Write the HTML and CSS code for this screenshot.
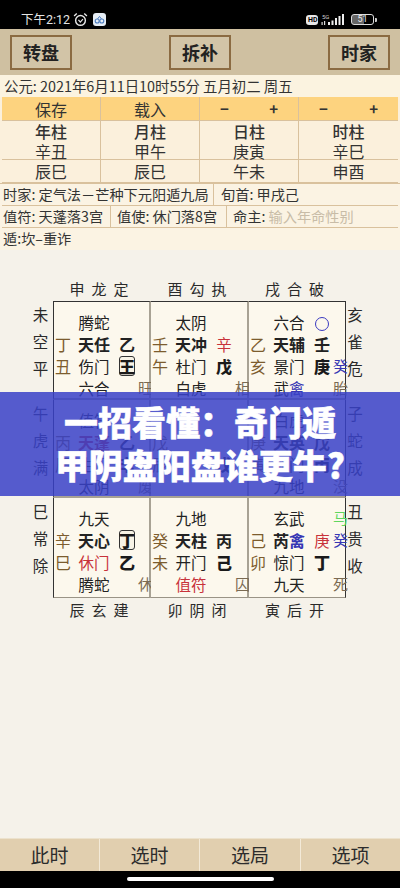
FILE: index.html
```html
<!DOCTYPE html>
<html lang="zh-CN">
<head>
<meta charset="utf-8">
<title>奇门遁甲</title>
<link rel="stylesheet" href="styles.css">
</head>
<body>
<div class="page">
  <header class="status">
    <div class="status-left">
      <span class="clock">下午2:12</span>
      <svg class="ic-alarm" viewBox="0 0 16 16" width="15" height="15"><circle cx="8" cy="9" r="5.2" fill="none" stroke="#e8e8e8" stroke-width="1.5"/><path d="M5.8 8.4 L7.8 10.8 L10.6 7.6" fill="none" stroke="#e8e8e8" stroke-width="1.3"/><path d="M1.2 4.2 L4 1.6 M14.8 4.2 L12 1.6" stroke="#e8e8e8" stroke-width="1.5" fill="none"/></svg>
      <svg class="ic-app" viewBox="0 0 13 13" width="13" height="13"><rect width="13" height="13" rx="3" fill="#e6edf5"/><circle cx="4.2" cy="8" r="2" fill="none" stroke="#4f7fc0" stroke-width="1.1"/><circle cx="8.8" cy="8" r="2" fill="none" stroke="#4f7fc0" stroke-width="1.1"/><path d="M4.5 6 L6.5 3.4 L8.5 6" fill="none" stroke="#4f7fc0" stroke-width="1"/></svg>
    </div>
    <div class="status-right">
      <span class="hd">HD</span>
      <svg viewBox="0 0 25 14" width="25" height="14"><text x="1" y="5.5" class="tiny">5G</text><rect x="0.5" y="9" width="1.2" height="3" fill="#ddd"/><rect x="3" y="8" width="1.2" height="4" fill="#ddd"/><rect x="7" y="9" width="2" height="3" fill="#eee"/><rect x="10.5" y="7.5" width="2" height="4.5" fill="#eee"/><rect x="14" y="5" width="2" height="7" fill="#eee"/><rect x="17.5" y="3" width="2" height="9" fill="#eee"/><rect x="21" y="1" width="2" height="11" fill="#eee"/></svg>
      <span class="battery"><span class="battery-num">51</span></span><span class="battery-tip"></span>
    </div>
  </header>

  <nav class="toolbar">
    <button class="tool">转盘</button>
    <button class="tool">拆补</button>
    <button class="tool">时家</button>
  </nav>

  <div class="date">公元: 2021年6月11日10时55分 五月初二 周五</div>

  <section class="pillars">
    <div class="p-row orange">
      <div class="p-cell">保存</div>
      <div class="p-cell">载入</div>
      <div class="p-cell pm"><span>−</span><span>+</span></div>
      <div class="p-cell pm"><span>−</span><span>+</span></div>
    </div>
    <div class="p-row">
      <div class="p-cell two"><b>年柱</b><span>辛丑</span></div>
      <div class="p-cell two"><b>月柱</b><span>甲午</span></div>
      <div class="p-cell two"><b>日柱</b><span>庚寅</span></div>
      <div class="p-cell two"><b>时柱</b><span>辛巳</span></div>
    </div>
    <div class="p-row">
      <div class="p-cell">辰巳</div>
      <div class="p-cell">辰巳</div>
      <div class="p-cell">午未</div>
      <div class="p-cell">申酉</div>
    </div>
  </section>

  <section class="info">
    <div class="i-row"><div class="i-cell">时家: 定气法－芒种下元阳遁九局</div><div class="i-cell">旬首: 甲戌己</div></div>
    <div class="i-row"><div class="i-cell">值符: 天蓬落3宫</div><div class="i-cell">值使: 休门落8宫</div><div class="i-cell">命主: <span class="hint">输入年命性别</span></div></div>
    <div class="i-row"><div class="i-cell">遁:坎–重诈</div></div>
  </section>

  <section class="board">
    <div class="corner"></div>
    <div class="edge"><span>申</span><span>龙</span><span>定</span></div>
    <div class="edge"><span>酉</span><span>勾</span><span>执</span></div>
    <div class="edge"><span>戌</span><span>合</span><span>破</span></div>
    <div class="corner"></div>

    <div class="side"><span>未</span><span>空</span><span>平</span></div>
    <div class="cell top first">
      <div class="line"><i></i><span class="star">腾蛇</span></div>
      <div class="line"><i>丁</i><span class="star brush">天任</span><span class="pan brush">乙</span></div>
      <div class="line"><i>丑</i><span class="star">伤门</span><span class="pan bold"><span class="boxed">王</span></span></div>
      <div class="line"><i></i><span class="star">六合</span><span></span><em>旺</em></div>
    </div>
    <div class="cell top">
      <div class="line"><i></i><span class="star">太阴</span></div>
      <div class="line"><i>壬</i><span class="star brush">天冲</span><span class="pan red">辛</span></div>
      <div class="line"><i>午</i><span class="star">杜门</span><span class="pan bold">戊</span></div>
      <div class="line"><i></i><span class="star">白虎</span><span></span><em>相</em></div>
    </div>
    <div class="cell top last">
      <div class="line"><i></i><span class="star">六合</span><span class="pan"><span class="ring"></span></span></div>
      <div class="line"><i>乙</i><span class="star brush">天辅</span><span class="pan brush">壬</span></div>
      <div class="line"><i>亥</i><span class="star">景门</span><span class="pan bold">庚</span><em class="blue">癸</em></div>
      <div class="line"><i></i><span class="star">武<span class="blue">禽</span></span><span></span><em>胎</em></div>
    </div>
    <div class="side"><span>亥</span><span>雀</span><span>危</span></div>

    <div class="side"><span>午</span><span>虎</span><span>满</span></div>
    <div class="cell first">
      <div class="line"><i></i><span class="star">值符</span></div>
      <div class="line"><i>丙</i><span class="star brush red">天蓬</span><span class="pan brush">乙</span></div>
      <div class="line"><i>辰</i><span class="star">生门</span><span class="pan bold">辛</span></div>
      <div class="line"><i></i><span class="star">太阴</span><span></span><em>废</em></div>
    </div>
    <div class="cell">
      <div class="line"><i></i></div>
      <div class="line"><i>戊</i></div>
      <div class="line"><i>辰</i><span class="star"></span><span class="pan bold">戊</span></div>
      <div class="line"><i></i></div>
    </div>
    <div class="cell last">
      <div class="line"><i></i><span class="star">白虎</span></div>
      <div class="line"><i>庚</i><span class="star brush">天英</span><span class="pan brush">戊</span></div>
      <div class="line"><i>寅</i><span class="star">死门</span><span class="pan bold">丙</span></div>
      <div class="line"><i></i><span class="star">九地</span><span></span><em>没</em></div>
    </div>
    <div class="side"><span>子</span><span>蛇</span><span>成</span></div>

    <div class="side"><span>巳</span><span>常</span><span>除</span></div>
    <div class="cell first bottom">
      <div class="line"><i></i><span class="star">九天</span></div>
      <div class="line"><i>辛</i><span class="star brush">天心</span><span class="pan bold"><span class="boxed">丁</span></span></div>
      <div class="line"><i>巳</i><span class="star red">休门</span><span class="pan bold">乙</span></div>
      <div class="line"><i></i><span class="star">腾蛇</span><span></span><em>休</em></div>
    </div>
    <div class="cell bottom">
      <div class="line"><i></i><span class="star">九地</span></div>
      <div class="line"><i>癸</i><span class="star brush">天柱</span><span class="pan brush">丙</span></div>
      <div class="line"><i>未</i><span class="star">开门</span><span class="pan bold">己</span></div>
      <div class="line"><i></i><span class="star red">值符</span><span></span><em>囚</em></div>
    </div>
    <div class="cell last bottom">
      <div class="line"><i></i><span class="star">玄武</span><span></span><em class="green">马</em></div>
      <div class="line"><i>己</i><span class="star brush">芮<span class="blue">禽</span></span><span class="pan red">庚</span><em class="blue">癸</em></div>
      <div class="line"><i>卯</i><span class="star">惊门</span><span class="pan bold">丁</span></div>
      <div class="line"><i></i><span class="star">九天</span><span></span><em>死</em></div>
    </div>
    <div class="side"><span>丑</span><span>贵</span><span>收</span></div>

    <div class="corner"></div>
    <div class="edge"><span>辰</span><span>玄</span><span>建</span></div>
    <div class="edge"><span>卯</span><span>阴</span><span>闭</span></div>
    <div class="edge"><span>寅</span><span>后</span><span>开</span></div>
    <div class="corner"></div>
  </section>

  <div class="spacer"></div>

  <footer class="tabs">
    <div class="tab">此时</div>
    <div class="tab">选时</div>
    <div class="tab">选局</div>
    <div class="tab">选项</div>
  </footer>
  <div class="home"><span class="pill"></span></div>

  <div class="banner">
    <p>一招看懂：奇门遁</p>
    <p>甲阴盘阳盘谁更牛?</p>
  </div>
</div>
</body>
</html>
```
FILE: styles.css
```css
* { box-sizing: border-box; }
html, body { margin: 0; padding: 0; }
body {
  width: 400px;
  height: 888px;
  overflow: hidden;
  background: #f5f2ea;
  font-family: "Noto Sans CJK SC", "Noto Sans", sans-serif;
  color: #2a2a2a;
}
.page { position: relative; width: 400px; height: 888px; display: flex; flex-direction: column; }

/* status bar */
.status {
  height: 29px;
  flex: none;
  background: #000;
  display: flex;
  justify-content: space-between;
  align-items: center;
  padding: 10px 23px 0 21px;
}
.status-left, .status-right { display: flex; align-items: center; }
.clock { font-size: 12.5px; line-height: 19px; color: #e4e4e4; font-family: "Roboto", "Noto Sans CJK SC", sans-serif; }
.ic-alarm { margin-left: 3px; }
.ic-app { margin-left: 5px; }
.hd { background: #e8e8e8; color: #000; font: 700 7px/10px "Roboto", sans-serif; padding: 0 2px; border-radius: 3px; width: 12px; text-align: center; margin-right: 3px; }
.tiny { font: 6px "Roboto", sans-serif; fill: #ccc; }
.battery { margin-left: 5px; width: 23px; height: 11px; border: 1px solid #ddd; border-radius: 3px; display: flex; align-items: center; justify-content: center; background: linear-gradient(90deg, #666 55%, transparent 55%); }
.battery-num { font: 9px/9px "Roboto", sans-serif; color: #eee; }
.battery-tip { width: 2px; height: 4px; background: #ccc; margin-left: 1px; border-radius: 0 1px 1px 0; }

/* toolbar */
.toolbar {
  height: 46px;
  flex: none;
  background: #cfc0a1;
  display: flex;
  justify-content: space-between;
  align-items: center;
  padding: 0 10px;
}
.tool {
  width: 62px;
  height: 35px;
  border: 2px solid #8b6b42;
  background: #d2c4a7;
  color: #222;
  font: 700 18px/1 "Noto Sans CJK SC", sans-serif;
  padding: 0;
}

.date {
  height: 22px;
  flex: none;
  background: #fbf3e0;
  font-size: 14.4px;
  line-height: 22px;
  padding-left: 4px;
  color: #333;
  white-space: nowrap;
}

/* pillars */
.pillars { flex: none; background: #fbf0dc; padding: 0 2px; }
.p-row { display: grid; grid-template-columns: 98px 99px 99px 100px; border-bottom: 1px solid #d9c19d; }
.p-row.orange { background: #fdd37f; height: 24px; }
.p-row:nth-child(2) { height: 39px; }
.p-row:nth-child(3) { height: 23px; }
.p-cell { border-left: 1px solid #d9c19d; display: flex; align-items: center; justify-content: center; font-size: 16px; line-height: 20px; color: #333; }
.p-cell:first-child { border-left: none; }
.p-cell.two { flex-direction: column; line-height: 20px; }
.p-cell.two b { font-weight: 500; }
.p-cell.pm { justify-content: space-between; padding: 0 20px; font-weight: 700; font-size: 15px; }

/* info */
.info { flex: none; background: #fbf3e3; padding: 0 2px; border-top: 1px solid #d9c19d; }
.i-row { display: flex; height: 22px; border-bottom: 1px solid #d9c19d; }
.i-row:last-child { border-bottom: none; }
.i-cell { font-size: 14.2px; line-height: 21px; padding: 0 8px 0 1px; color: #333; white-space: nowrap; border-right: 1px solid #d9c19d; }
.i-cell:last-child { border-right: none; }
.i-row:first-child .i-cell:first-child { width: 212px; }
.i-row:first-child .i-cell:last-child { padding-left: 7px; }
.i-row:nth-child(2) .i-cell:nth-child(1) { width: 109px; }
.i-row:nth-child(2) .i-cell:nth-child(2) { width: 116px; padding-left: 6px; }
.i-row:nth-child(2) .i-cell:nth-child(3) { padding-left: 6px; }
.hint { color: #c8bca7; }

/* board */
.board {
  flex: none;
  margin-top: 27px;
  display: grid;
  grid-template-columns: 53px 98px 98px 97px 54px;
  grid-template-rows: 24px 99px 98px 100px 26px;
  font-size: 15.5px;
}
.edge { display: flex; justify-content: center; gap: 7px; font-size: 15px; line-height: 24px; padding-right: 6px; }
.side { display: flex; flex-direction: column; align-items: center; justify-content: flex-start; padding: 3px 0 0 28px; gap: 6px; font-size: 15.5px; line-height: 21px; }
.cell + .side { padding: 3px 36px 0 0; }
.cell {
  background: #fcf8ed;
  border-right: 2px solid #a8a294;
  border-bottom: 2px solid #a8a294;
  padding-top: 9px;
}
.cell.top { border-top: 1px solid #333; }
.cell.first { border-left: 1px solid #333; }
.cell.last { border-right: 1px solid #333; }
.cell.bottom { border-bottom: 1px solid #9a9486; }
.line { display: grid; grid-template-columns: 18px 44px 22px 14px; height: 22px; line-height: 22px; text-align: center; white-space: nowrap; color: #222; }
.line i { font-style: normal; color: #7c5c2e; font-size: 16px; }
.line em { font-style: normal; color: #7a6a52; font-size: 15px; width: 14px; }
.brush { font-weight: 700; font-size: 16px; }
.pan.bold { font-weight: 900; font-size: 16px; color: #1a1a1a; }
.red { color: #c8323a; }
.line .blue, .blue { color: #3636b4; }
.line .green { color: #5fd65f; }
.boxed { display: inline-flex; align-items: center; justify-content: center; width: 16px; height: 20px; border: 1px solid #333; border-radius: 3px; background: #f7f3e6; line-height: 18px; }
.ring { display: inline-block; width: 14px; height: 14px; border: 1.5px solid #3a3ac0; border-radius: 50%; vertical-align: -2px; }

.spacer { flex: 1; }

/* bottom tabs */
.tabs { flex: none; height: 33px; background: #e1cfaf; display: grid; grid-template-columns: 100px 100px 101px 99px; border-top: 1px solid #ece2cd; }
.tab { font-size: 19px; line-height: 32px; text-align: center; color: #2c2c2c; border-right: 1px solid #f3ead8; }
.tab:last-child { border-right: none; }
.home { flex: none; height: 17px; background: #000; display: flex; align-items: flex-start; justify-content: center; padding-top: 6px; }
.pill { width: 147px; height: 4px; border-radius: 2px; background: #fff; }

/* overlay banner */
.banner {
  position: absolute;
  left: 0;
  top: 392px;
  width: 400px;
  height: 104px;
  padding-bottom: 2px;
  background: rgba(56, 65, 200, 0.85);
  display: flex;
  flex-direction: column;
  align-items: center;
  justify-content: center;
}
.banner p { margin: 0; color: #fff; font-size: 34px; line-height: 43px; font-weight: 900; white-space: nowrap; -webkit-text-stroke: 0.5px #fff; }
```
